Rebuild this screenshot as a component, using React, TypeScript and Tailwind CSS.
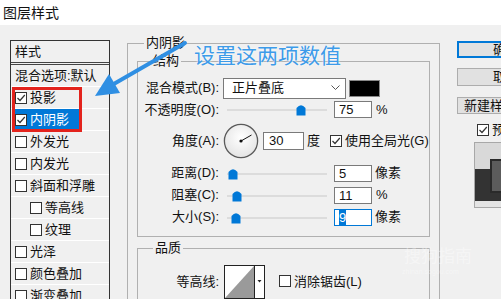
import type { ReactNode } from 'react';

function Check({ checked }: { checked?: boolean }) {
  return (
    <span className="inline-flex h-[12px] w-[12px] shrink-0 items-center justify-center border border-[#333333] bg-white">
      {checked && (
        <svg width="10" height="10" viewBox="0 0 10 10">
          <path d="M1.5 5 L4 7.5 L8.8 2" fill="none" stroke="#333333" strokeWidth="1.2" />
        </svg>
      )}
    </span>
  );
}

function Group({ title, left, className, children }: { title: string; left: string; className: string; children?: ReactNode }) {
  return (
    <div className={`relative shrink-0 border border-[#b0b0b0] ${className}`}>
      <span className={`absolute -top-[10px] bg-[#f0f0f0] px-[2px] text-[13px] leading-[18px] ${left}`}>{title}</span>
      {children}
    </div>
  );
}

function Slider({ pos }: { pos: number }) {
  return (
    <div className="relative ml-[8px] h-[13px] w-[100px] shrink-0">
      <div className="absolute left-0 right-0 top-[6px] h-[2px] bg-[#dcdcdc]" />
      <svg className="absolute top-0" style={{ left: pos - 5 }} width="10" height="13" viewBox="0 0 10 13">
        <path d="M0.5 5 Q5 -0.5 9.5 5 V12.5 H0.5 Z" fill="#0078d7" />
      </svg>
    </div>
  );
}

function Field({ value, selected }: { value: string; selected?: boolean }) {
  return (
    <div
      className={`ml-[7px] flex h-[17px] w-[38px] shrink-0 items-center bg-white pl-[4px] text-[13px] leading-[15px] ${
        selected ? 'border border-[#0078d7]' : 'border border-[#7a7a7a]'
      }`}
    >
      {selected ? <span className="bg-[#0078d7] text-white">{value}</span> : value}
    </div>
  );
}

function Row({ label, h, children }: { label: string; h: string; children?: ReactNode }) {
  return (
    <div className={`flex items-center ${h}`}>
      <span className="w-[81px] shrink-0 text-right text-[13px] leading-[16px]">{label}</span>
      {children}
    </div>
  );
}

const styles: { name: string; checked?: boolean; indent?: boolean; active?: boolean; plain?: boolean }[] = [
  { name: '混合选项:默认', plain: true },
  { name: '投影', checked: true },
  { name: '内阴影', checked: true, active: true },
  { name: '外发光' },
  { name: '内发光' },
  { name: '斜面和浮雕' },
  { name: '等高线', indent: true },
  { name: '纹理', indent: true },
  { name: '光泽' },
  { name: '颜色叠加' },
  { name: '渐变叠加' },
];

export default function App() {
  return (
    <div className="relative h-[299px] w-[501px] overflow-hidden bg-[#f0f0f0] font-['Liberation_Sans','Noto_Sans_CJK_SC',sans-serif] text-[#111111]">
      <div className="flex h-[25px] items-center bg-white pl-[3px] text-[14px] leading-[18px]">图层样式</div>

      <div className="flex items-start">
        {/* style list */}
        <div className="ml-[10px] mt-[15px] w-[100px] shrink-0 border border-[#333333]">
          <div className="flex h-[24px] items-center border-b-[3px] border-double border-[#444444] pl-[4px] text-[13px]">样式</div>
          {styles.map((s) => (
            <div
              key={s.name}
              className={`flex h-[22px] items-center border-b border-white text-[13px] leading-[16px] ${
                s.indent ? 'pl-[19px]' : s.active ? 'pl-[2px]' : 'pl-[4px]'
              }`}
            >
              {s.plain ? (
                <span>{s.name}</span>
              ) : s.active ? (
                <div className="flex h-[21px] w-[67px] items-center gap-[3px] bg-[#0078d7] pl-[2px] text-white">
                  <Check checked />
                  <span>{s.name}</span>
                </div>
              ) : (
                <div className="flex items-center gap-[3px]">
                  <Check checked={s.checked} />
                  <span>{s.name}</span>
                </div>
              )}
            </div>
          ))}
        </div>

        {/* inner shadow settings */}
        <Group title="内阴影" left="left-[16px]" className="ml-[17px] mt-[18px] h-[300px] w-[313px]">
          <Group title="结构" left="left-[13px]" className="ml-[9px] mt-[17px] w-[293px]">
            <div className="pb-[8px] pt-[15px]">
              <Row label="混合模式(B):" h="h-[22px]">
                <div className="ml-[4px] flex h-[21px] w-[123px] shrink-0 items-center justify-between border border-[#7a7a7a] bg-white pl-[8px] pr-[5px] text-[13px]">
                  <span>正片叠底</span>
                  <svg width="9" height="6" viewBox="0 0 9 6">
                    <path d="M0.5 0.5 L4.5 4.5 L8.5 0.5" fill="none" stroke="#555555" strokeWidth="1" />
                  </svg>
                </div>
                <div className="ml-[3px] h-[17px] w-[31px] shrink-0 border border-[#888888] bg-black" />
              </Row>
              <Row label="不透明度(O):" h="h-[21px]">
                <Slider pos={74} />
                <Field value="75" />
                <span className="ml-[4px] text-[13px]">%</span>
              </Row>
              <Row label="角度(A):" h="h-[42px]">
                <svg className="ml-[4px] shrink-0" width="36" height="36" viewBox="0 0 36 36">
                  <defs>
                    <radialGradient id="dial" cx="0.5" cy="0.4" r="0.6">
                      <stop offset="0" stopColor="#ffffff" />
                      <stop offset="1" stopColor="#e4e4e4" />
                    </radialGradient>
                  </defs>
                  <circle cx="18" cy="18" r="16.6" fill="url(#dial)" stroke="#5a5a5a" strokeWidth="1.3" />
                  <line x1="18" y1="18" x2="28.5" y2="12" stroke="#111111" strokeWidth="1" />
                  <circle cx="18" cy="18" r="1.6" fill="#111111" />
                </svg>
                <div className="ml-[4px] flex h-[18px] w-[41px] shrink-0 items-center border border-[#7a7a7a] bg-white pl-[5px] text-[13px]">30</div>
                <span className="ml-[3px] text-[13px]">度</span>
                <span className="ml-[10px]">
                  <Check checked />
                </span>
                <span className="ml-[3px] whitespace-nowrap text-[13px]">使用全局光(G)</span>
              </Row>
              <Row label="距离(D):" h="h-[22px]">
                <Slider pos={6} />
                <Field value="5" />
                <span className="ml-[3px] text-[13px]">像素</span>
              </Row>
              <Row label="阻塞(C):" h="h-[22px]">
                <Slider pos={10} />
                <Field value="11" />
                <span className="ml-[4px] text-[13px]">%</span>
              </Row>
              <Row label="大小(S):" h="h-[22px]">
                <Slider pos={9} />
                <Field value="9" selected />
                <span className="ml-[3px] text-[13px]">像素</span>
              </Row>
            </div>
          </Group>

          <Group title="品质" left="left-[15px]" className="ml-[9px] mt-[11px] h-[80px] w-[293px]">
            <div className="pt-[16px]">
              <div className="flex items-center">
                <span className="w-[81px] shrink-0 text-right text-[13px] leading-[16px]">等高线:</span>
                <svg className="ml-[5px] shrink-0" width="41" height="34" viewBox="0 0 41 34">
                  <rect x="0.5" y="0.5" width="40" height="33" fill="#ffffff" stroke="#222222" />
                  <path d="M1 33 L30 1 L30 33 Z" fill="#9a9a9a" />
                  <line x1="30.5" y1="0.5" x2="30.5" y2="33.5" stroke="#222222" />
                  <path d="M33.5 15 L37.5 15 L35.5 17.5 Z" fill="#222222" />
                </svg>
                <span className="ml-[14px]">
                  <Check />
                </span>
                <span className="ml-[3px] whitespace-nowrap text-[13px]">消除锯齿(L)</span>
              </div>
            </div>
          </Group>
        </Group>

        {/* buttons */}
        <div className="ml-[17px] mt-[16px] flex w-[98px] shrink-0 flex-col text-[13px]">
          <div className="flex h-[17px] items-center justify-center border-2 border-[#0078d7] bg-[#e1e1e1]">确定</div>
          <div className="mt-[10px] flex h-[18px] items-center justify-center border border-[#adadad] bg-[#e1e1e1]">取消</div>
          <div className="mt-[11px] flex h-[17px] items-center justify-center whitespace-nowrap border border-[#adadad] bg-[#e1e1e1]">新建样式(W)...</div>
          <div className="ml-[20px] mt-[9px] flex h-[14px] items-center gap-[3px]">
            <Check checked />
            <span>预览(V)</span>
          </div>
          <svg className="ml-[17px] mt-[5px]" width="60" height="66" viewBox="0 0 60 66">
            <rect x="0.5" y="0.5" width="59" height="65" fill="#d9d9d9" stroke="#a8a8a8" />
            <rect x="1" y="27" width="58" height="32" fill="#333333" />
            <rect x="1" y="59" width="58" height="6" fill="#e4e4e4" />
            <rect x="17" y="18" width="40" height="32" fill="#5c5c5c" stroke="#2a2a2a" strokeWidth="2" />
          </svg>
        </div>
      </div>

      {/* annotation overlay */}
      <div className="pointer-events-none absolute left-[12px] top-[87px] h-[45px] w-[70px] border-[3px] border-[#e3231c]" />
      <svg className="pointer-events-none absolute left-0 top-0" width="501" height="299" viewBox="0 0 501 299">
        <line x1="185" y1="43" x2="112" y2="85" stroke="#2f8fe3" strokeWidth="4" strokeLinecap="round" />
        <polygon points="95,96 109,74 120,93" fill="#2f8fe3" />
      </svg>
      <div className="pointer-events-none absolute left-[194px] top-[45px] whitespace-nowrap text-[21px] leading-[22px] text-[#3d9be9] [text-shadow:0_0_2px_#ffffff]">
        设置这两项数值
      </div>
      <div className="pointer-events-none absolute left-[404px] top-[247px] text-[17px] leading-[20px] text-white/40">搜狗指南</div>
      <div className="pointer-events-none absolute left-[402px] top-[268px] text-[7px] leading-[8px] text-white/40">zhinan.sogou.com</div>
    </div>
  );
}
